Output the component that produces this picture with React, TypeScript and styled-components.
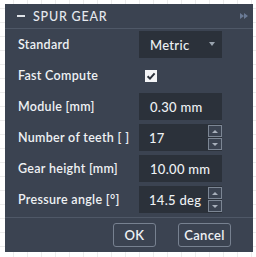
import styled, { createGlobalStyle } from 'styled-components';

const GlobalStyle = createGlobalStyle`
	html, body {
		margin: 0;
		padding: 0;
	}
	body {
		width: 256px;
		height: 257px;
		overflow: hidden;
		background-color: #fff;
		background-image:
			linear-gradient(to right, #ececec 1px, transparent 1px),
			linear-gradient(to bottom, #ececec 1px, transparent 1px);
		background-size: 14px 14px;
		background-position: 13px 8px;
		font-family: Lato, 'Open Sans', sans-serif;
	}
`;

type Field = {
	label: string;
	kind: 'select' | 'check' | 'text' | 'spin';
	value?: string;
};

const fields: Field[] = [
	{ label: 'Standard', kind: 'select', value: 'Metric' },
	{ label: 'Fast Compute', kind: 'check' },
	{ label: 'Module [mm]', kind: 'text', value: '0.30 mm' },
	{ label: 'Number of teeth [ ]', kind: 'spin', value: '17' },
	{ label: 'Gear height [mm]', kind: 'text', value: '10.00 mm' },
	{ label: 'Pressure angle [°]', kind: 'spin', value: '14.5 deg' },
];

const App = () => {
	return (
		<>
			<GlobalStyle />
			<Panel>
				<Header>
					<Dash />
					<Title>Spur Gear</Title>
					<Chevrons viewBox='0 0 8 6' width={8} height={6}>
						<path d='M0 0 L4 3 L0 6 Z M4 0 L8 3 L4 6 Z' fill='#6a7a95' />
					</Chevrons>
				</Header>
				<Body>
					{fields.map((f) => (
						<Row key={f.label}>
							<Label>{f.label}</Label>
							{f.kind === 'select' && (
								<Box>
									{f.value}
									<Caret />
								</Box>
							)}
							{f.kind === 'check' && (
								<CheckCell>
									<CheckBox>
										<svg viewBox='0 0 12 12' width={12} height={12}>
											<path d='M2.6 6.2 L5 8.6 L9.6 3.4' fill='none' stroke='#2c323b' strokeWidth={2} />
										</svg>
									</CheckBox>
								</CheckCell>
							)}
							{f.kind === 'text' && <Box>{f.value}</Box>}
							{f.kind === 'spin' && (
								<SpinWrap>
									<Box $spin>{f.value}</Box>
									<Spinner>
										<SpinBtn><SpinArrow $up /></SpinBtn>
										<SpinBtn><SpinArrow /></SpinBtn>
									</Spinner>
								</SpinWrap>
							)}
						</Row>
					))}
				</Body>
				<Footer>
					<Button style={{ width: 43 }}>OK</Button>
					<Button style={{ width: 53 }}>Cancel</Button>
				</Footer>
			</Panel>
		</>
	);
};

export default App;

const Panel = styled.div`
	margin: 4px 0 0 5px;
	width: 248px;
	height: 248px;
	background: #3b4351;
	display: flex;
	flex-direction: column;
	color: #eef1f4;
	font-size: 12.5px;
	font-weight: 600;
	letter-spacing: 0.3px;
`;
const Header = styled.div`
	border-bottom: 1px solid #4f5867;
	display: flex;
	align-items: center;
	padding: 0 5px 0 12px;
	box-sizing: border-box;
	height: 25px;
`;
const Dash = styled.div`
	width: 8px;
	height: 1.5px;
	background: #dfe3e8;
	margin-right: 8px;
`;
const Title = styled.div`
	flex: 1;
	text-transform: uppercase;
	font-size: 12.5px;
	font-weight: 500;
	letter-spacing: 0.8px;
	color: #e6e9ee;
`;
const Chevrons = styled.svg`
	display: block;
`;
const Body = styled.div`
	display: flex;
	flex-direction: column;
	gap: 4px;
	padding: 2px 0 4px 13px;
	border-bottom: 1px solid #4f5867;
`;
const Row = styled.div`
	display: grid;
	grid-template-columns: 121px 83px;
	height: 27px;
	align-items: center;
`;
const Label = styled.div`
	white-space: nowrap;
`;
const Box = styled.div<{ $spin?: boolean }>`
	position: relative;
	height: 27px;
	width: ${(props) => (props.$spin ? '69px' : '83px')};
	box-sizing: border-box;
	background: #2b313a;
	display: flex;
	align-items: center;
	padding-left: ${(props) => (props.$spin ? '10px' : '11px')};
	font-size: 13px;
	font-weight: 500;
`;
const Caret = styled.div`
	position: absolute;
	right: 7px;
	top: 11px;
	width: 0;
	height: 0;
	border-left: 3px solid transparent;
	border-right: 3px solid transparent;
	border-top: 4px solid #9aa3ae;
`;
const CheckCell = styled.div`
	padding-left: 6px;
	display: flex;
	align-items: center;
`;
const CheckBox = styled.div`
	width: 12px;
	height: 12px;
	background: #f4f5f7;
	svg { display: block; }
`;
const SpinWrap = styled.div`
	display: flex;
	height: 27px;
`;
const Spinner = styled.div`
	width: 14px;
	display: flex;
	flex-direction: column;
	gap: 1px;
	padding: 1px 0;
	box-sizing: border-box;
	background: #2b313a;
`;
const SpinBtn = styled.div`
	flex: 1;
	border: 1px solid #7c8694;
	background: #3b4351;
	display: flex;
	align-items: center;
	justify-content: center;
`;
const SpinArrow = styled.div<{ $up?: boolean }>`
	width: 0;
	height: 0;
	border-left: 3px solid transparent;
	border-right: 3px solid transparent;
	${(props) => (props.$up ? 'border-bottom: 3px solid #a8b0bb;' : 'border-top: 3px solid #a8b0bb;')}
`;
const Footer = styled.div`
	flex: 1;
	display: flex;
	justify-content: flex-end;
	align-items: flex-start;
	gap: 22px;
	padding: 5px 22px 0 0;
`;
const Button = styled.div`
	height: 24px;
	box-sizing: border-box;
	border: 1px solid #778190;
	border-radius: 3px;
	display: flex;
	align-items: center;
	justify-content: center;
	font-size: 13px;
	font-weight: 600;
	color: #eef1f4;
`;
